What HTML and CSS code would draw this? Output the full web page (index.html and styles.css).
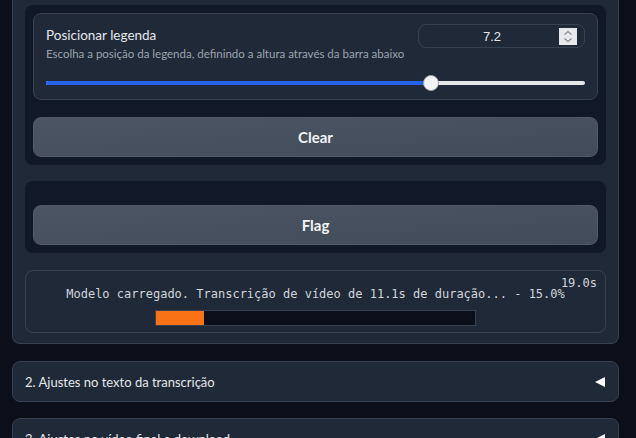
FILE: index.html
```html
<!DOCTYPE html>
<html lang="pt">
<head>
<meta charset="utf-8">
<link rel="stylesheet" href="styles.css">
</head>
<body>
<div class="wrap">
  <div class="panel">
    <div class="group group-first">
      <div class="slider-block">
        <div class="slider-head">
          <div class="labels">
            <div class="label">Posicionar legenda</div>
            <div class="info">Escolha a posição da legenda, definindo a altura através da barra abaixo</div>
          </div>
          <div class="num">
            <span class="num-val">7.2</span>
            <span class="spin">
              <svg width="18" height="17" viewBox="0 0 18 17"><path d="M5.5 6.5 L9 3.5 L12.5 6.5" fill="none" stroke="#8a8f98" stroke-width="1.3"/><path d="M5.5 10.5 L9 13.5 L12.5 10.5" fill="none" stroke="#8a8f98" stroke-width="1.3"/></svg>
            </span>
          </div>
        </div>
        <div class="track">
          <div class="fill" style="width:71.5%"></div>
          <div class="thumb"></div>
        </div>
      </div>
      <button class="btn">Clear</button>
    </div>
    <div class="group group-flag">
      <button class="btn">Flag</button>
    </div>
    <div class="progress-box">
      <div class="timer">19.0s</div>
      <div class="status">Modelo carregado. Transcrição de vídeo de 11.1s de duração... - 15.0%</div>
      <div class="bar"><div class="bar-fill" style="width:15%"></div></div>
    </div>
  </div>
  <div class="accordion">
    <span>2. Ajustes no texto da transcrição</span>
    <span class="arrow"></span>
  </div>
  <div class="accordion">
    <span>3. Ajustes no vídeo final e download</span>
    <span class="arrow"></span>
  </div>
</div>
</body>
</html>
```
FILE: styles.css
```css
* { box-sizing: border-box; }
html, body { margin: 0; padding: 0; background: #0b0f19; overflow: hidden; }
body { font-family: "Lato", "Noto Sans", sans-serif; color: #e5e7eb; height: 438px; }
.wrap { padding: 0 17px 0 12px; display: flex; flex-direction: column; gap: 17px; }
.panel {
  margin-top: -8px;
  background: #1f2937;
  border: 1px solid #374151;
  border-top: none;
  border-radius: 0 0 8px 8px;
  padding: 13px 12px 10px;
  display: flex; flex-direction: column; gap: 16px;
}
.group { background: #111827; border-radius: 8px; padding: 8px; display: flex; flex-direction: column; gap: 17px; }
.group-flag { padding-top: 24px; }
.progress-box { margin-top: 1px; }
.slider-block {
  background: #1f2937; border: 1px solid #374151; border-radius: 8px;
  padding: 10px 12px 0; height: 87px;
}
.slider-head { display: flex; justify-content: space-between; align-items: flex-start; height: 38px; }
.labels { padding-top: 2px; min-width: 0; white-space: nowrap; }
.label { font-size: 13.5px; line-height: 18px; color: #e5e7eb; }
.info { font-size: 11.5px; line-height: 16px; color: #9ca3af; margin-top: 2px; }
.num {
  flex: none;
  width: 167px; height: 24px; border: 1px solid #374151; border-radius: 8px;
  display: flex; align-items: center; padding-right: 7px;
}
.num-val { flex: 1; text-align: center; font-family: "Liberation Sans", sans-serif; font-size: 13px; color: #e5e7eb; padding-left: 6px; }
.spin { width: 18px; height: 17px; background: #e7e8ea; display: block; }
.spin svg { display: block; }
.track { position: relative; height: 4px; margin-top: 19px; background: #e5e7eb; border-radius: 2px; }
.fill { height: 4px; background: #2563eb; border-radius: 2px; }
.thumb {
  position: absolute; left: calc(71.5% - 8px); top: -6px; width: 16px; height: 16px;
  border-radius: 50%; background: #f3f4f6; border: 1px solid #9ca3af;
}
.btn {
  display: block; width: 100%; height: 40px; border-radius: 8px;
  border: 1px solid #515b69;
  background: linear-gradient(to bottom right, #4b5563, #414b59);
  color: #f3f4f6; font-family: inherit; font-weight: 700; font-size: 15px;
}
.progress-box {
  position: relative;
  border: 1px solid #374151; border-radius: 8px; height: 63px;
  display: flex; flex-direction: column; align-items: center; padding-top: 15px;
}
.timer {
  position: absolute; right: 8px; top: 5px;
  font-family: "DejaVu Sans Mono", monospace; font-size: 12px; color: #d1d5db;
}
.status { font-family: "DejaVu Sans Mono", monospace; font-size: 12px; line-height: 16px; color: #d1d5db; }
.bar { margin-top: 8px; width: 321px; height: 16px; background: #0b0f19; border: 1px solid #374151; }
.bar-fill { height: 100%; background: #f97316; }
.accordion {
  flex: none;
  height: 41px; background: #1f2937; border: 1px solid #374151; border-radius: 8px;
  display: flex; align-items: center; justify-content: space-between;
  padding: 0 13px 0 12px; font-size: 13px; color: #e5e7eb;
}
.accordion + .accordion { margin-top: -1px; }
.arrow {
  width: 0; height: 0;
  border-top: 5.5px solid transparent; border-bottom: 5.5px solid transparent;
  border-right: 10px solid #ffffff;
}
```
